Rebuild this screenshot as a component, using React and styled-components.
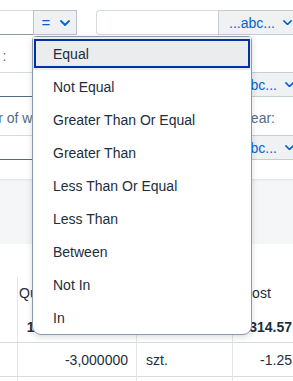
import styled, { createGlobalStyle } from 'styled-components';

const GlobalStyle = createGlobalStyle`
  html, body {
    margin: 0;
    padding: 0;
    background: #ffffff;
  }
  body {
    font-family: "Liberation Sans", Arial, sans-serif;
    font-size: 14px;
    color: #1d2d3e;
  }
`;

const operators = [
  'Equal',
  'Not Equal',
  'Greater Than Or Equal',
  'Greater Than',
  'Less Than Or Equal',
  'Less Than',
  'Between',
  'Not In',
  'In',
];

const Chevron = ({ size = 10 }) => (
  <svg width={size} height={size * 0.6} viewBox="0 0 10 6" fill="none">
    <path d="M1 1l4 4 4-4" stroke="#0064d9" strokeWidth="1.8" strokeLinecap="round" strokeLinejoin="round" />
  </svg>
);

const App = () => {
  return (
    <>
      <GlobalStyle />
      <Page>
        <FilterBar>
          <FieldRow>
            <TextInput />
            <OperatorButton>
              <span>=</span>
              <Chevron />
            </OperatorButton>
            <span />
            <TextInput $rounded $width={122} />
            <ValueButton>
              <span>...abc...</span>
              <Chevron size={9} />
            </ValueButton>
          </FieldRow>
          <LabelRow $height={37}>
            <Label $offset={-3}>Version :</Label>
          </LabelRow>
          <FieldRow>
            <TextInput $dark />
            <OperatorButton>
              <span>=</span>
              <Chevron />
            </OperatorButton>
            <span />
            <TextInput $rounded $width={124} />
            <ValueButton>
              <span>...abc...</span>
              <Chevron size={9} />
            </ValueButton>
          </FieldRow>
          <LabelRow $height={38}>
            <Label $offset={-2}>Number of weeks:</Label>
            <Label $right>Fiscal Year:</Label>
          </LabelRow>
          <FieldRow>
            <TextInput $dark />
            <OperatorButton>
              <span>=</span>
              <Chevron />
            </OperatorButton>
            <span />
            <TextInput $rounded $width={124} />
            <ValueButton>
              <span>...abc...</span>
              <Chevron size={9} />
            </ValueButton>
          </FieldRow>
        </FilterBar>

        <Toolbar />

        <Table>
          <HeaderCell />
          <HeaderCell>
            <HeaderLabel>Quantity</HeaderLabel>
            <Total>125 000,000000</Total>
          </HeaderCell>
          <HeaderCell>
            <HeaderLabel>Unit</HeaderLabel>
          </HeaderCell>
          <HeaderCell>
            <HeaderLabel>Cost</HeaderLabel>
            <Total>314.57</Total>
          </HeaderCell>

          <Cell />
          <Cell $align="right">-3,000000</Cell>
          <Cell>szt.</Cell>
          <Cell $align="right">-1.25</Cell>

          <Cell />
          <Cell />
          <Cell />
          <Cell />
        </Table>

        <Popover>
          {operators.map((op) => (
            <Option key={op} $focused={op === 'Equal'}>
              {op}
            </Option>
          ))}
        </Popover>
      </Page>
    </>
  );
};

const Page = styled.div`
  position: relative;
  width: 293px;
  height: 381px;
  overflow: hidden;
  background: #ffffff;
`;

const FilterBar = styled.div`
  margin-left: -45px;
  padding-top: 10px;
  padding-bottom: 19px;
`;

const FieldRow = styled.div`
  display: flex;
  height: 25px;
  & > span:empty {
    width: 19px;
    flex: none;
  }
`;

const TextInput = styled.div`
  box-sizing: border-box;
  flex: none;
  width: ${(p) => p.$width || 78}px;
  height: 25px;
  background: #ffffff;
  border: 1px solid #d5dadd;
  border-bottom-color: ${(p) => (p.$dark ? '#556b82' : '#8d9bab')};
  border-left: ${(p) => (p.$rounded ? '1px solid #d5dadd' : 'none')};
  border-right: none;
  border-radius: ${(p) => (p.$rounded ? '4px 0 0 4px' : '0')};
  ${(p) => p.$rounded && 'border-bottom-color: #d5dadd;'}
`;

const OperatorButton = styled.div`
  box-sizing: border-box;
  flex: none;
  width: 44px;
  height: 25px;
  display: flex;
  align-items: center;
  justify-content: center;
  gap: 10px;
  padding-left: 2px;
  background: #eff1f2;
  border: 1px solid #bcc3ca;
  color: #0064d9;
  font-size: 15px;
`;

const ValueButton = styled.div`
  box-sizing: border-box;
  flex: none;
  width: 90px;
  height: 25px;
  display: flex;
  align-items: center;
  gap: 8px;
  padding-left: 10px;
  background: #eff1f2;
  border: 1px solid #c6cdd3;
  border-right: none;
  color: #0064d9;
  font-size: 14px;
`;

const LabelRow = styled.div`
  box-sizing: border-box;
  height: ${(p) => p.$height}px;
  padding-top: 13px;
  display: flex;
  justify-content: space-between;
  line-height: 16px;
`;

const Label = styled.div`
  color: #556b82;
  font-size: 14px;
  white-space: nowrap;
  margin-left: ${(p) => p.$offset || 0}px;
  padding-right: ${(p) => (p.$right ? '18px' : '0')};
`;

const Toolbar = styled.div`
  height: 64px;
  background: #f5f6f7;
  border-top: 1px solid #e4e6e9;
  box-shadow: inset 0 1px 1px rgba(0, 0, 0, 0.03);
  margin-bottom: 33px;
`;

const Table = styled.div`
  display: grid;
  grid-template-columns: 10px 127px 96px 68px;
  grid-auto-rows: 34px;
  grid-template-rows: 66px;
`;

const HeaderCell = styled.div`
  box-sizing: border-box;
  border-right: 1px solid #e5e5e5;
  border-bottom: 1px solid #d9dcdf;
  padding: 7px 8px 0 9px;
  display: flex;
  flex-direction: column;
  white-space: nowrap;
  overflow: hidden;
`;

const HeaderLabel = styled.div`
  line-height: 18px;
  color: #1d2d3e;
`;

const Total = styled.div`
  margin-top: 16px;
  line-height: 18px;
  font-weight: bold;
  text-align: right;
`;

const Cell = styled.div`
  box-sizing: border-box;
  border-right: 1px solid #e5e5e5;
  border-bottom: 1px solid #d9dcdf;
  padding: 0 8px 0 9px;
  display: flex;
  align-items: center;
  justify-content: ${(p) => (p.$align === 'right' ? 'flex-end' : 'flex-start')};
  white-space: nowrap;
  overflow: hidden;
`;

const Popover = styled.div`
  position: absolute;
  top: 36px;
  left: 32px;
  width: 220px;
  box-sizing: border-box;
  padding: 0;
  background: #ffffff;
  border: 1px solid #8a9bb0;
  border-radius: 4px 4px 9px 9px;
  box-shadow: 0 2px 6px rgba(34, 53, 72, 0.18);
`;

const Option = styled.div`
  position: relative;
  height: 33px;
  display: flex;
  align-items: center;
  padding-left: 20px;
  font-size: 14px;
  color: #1d2d3e;
  white-space: nowrap;
  background: ${(p) => (p.$focused ? '#eaecee' : 'transparent')};
  ${(p) =>
    p.$focused &&
    `
    &::after {
      content: '';
      position: absolute;
      inset: 2px 1px 2px 1px;
      border: 2px solid #0032a5;
      pointer-events: none;
    }
  `}
`;

export default App;
